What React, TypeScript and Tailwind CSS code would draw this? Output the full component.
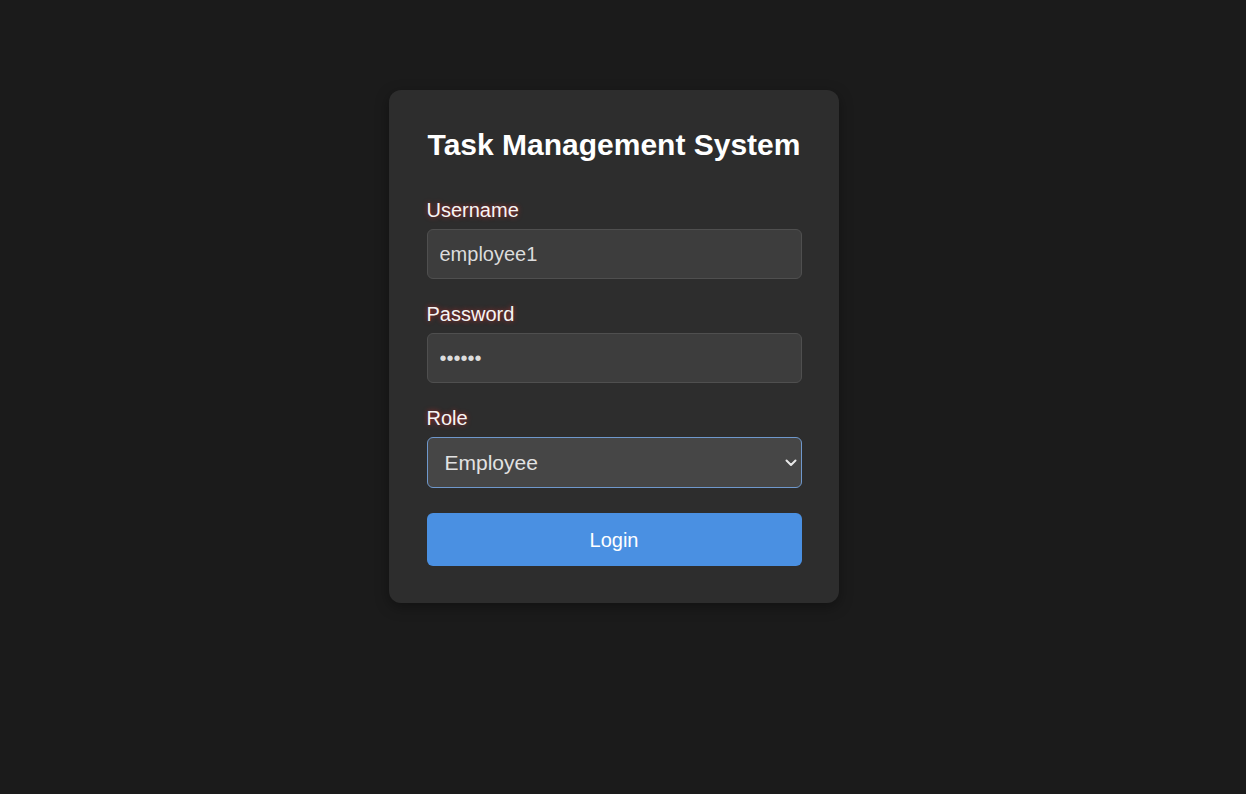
import React from "react";

const labelCls =
  "block text-[20px] leading-[23px] text-[#f5f5f5] mb-[7px] [text-shadow:0_0_5px_rgba(230,40,40,0.7)]";
const inputCls =
  "block w-full h-[50px] rounded-[6px] border border-[#4f4f4f] bg-[#3d3d3d] px-[12px] text-[20px] text-[#dcdcdc] outline-none";

export default function App() {
  return (
    <div
      className="min-h-[794px] w-full bg-[#1b1b1b] flex justify-center pt-[90px] pr-[19px]"
      style={{ fontFamily: '"Liberation Sans", Arial, sans-serif' }}
    >
      <div className="w-[450px] h-[513px] rounded-[12px] bg-[#2d2d2d] pl-[38px] pr-[37px] pt-[38px] pb-[37px] shadow-[0_4px_14px_rgba(0,0,0,0.35)]">
        <h1 className="text-center text-[30px] leading-[34px] font-bold text-white mb-[37px]">
          Task Management System
        </h1>

        <div className="mb-[24px]">
          <label className={labelCls}>Username</label>
          <input className={inputCls} readOnly value="employee1" />
        </div>

        <div className="mb-[24px]">
          <label className={labelCls}>Password</label>
          <input className={inputCls} readOnly type="password" value="123456" />
        </div>

        <div className="mb-[25px]">
          <label className={labelCls}>Role</label>
          <div className="relative">
            <select
              className="block w-full h-[51px] appearance-none rounded-[6px] border border-[#6f98cc] bg-[#464646] pl-[17px] pr-[40px] text-[21px] text-[#e2e2e2] outline-none"
              defaultValue="employee"
            >
              <option value="employee">Employee</option>
              <option value="admin">Admin</option>
            </select>
            <svg
              className="pointer-events-none absolute right-[5px] top-[22px]"
              width="12"
              height="8"
              viewBox="0 0 12 8"
              fill="none"
            >
              <path
                d="M1.5 1.5L6 6L10.5 1.5"
                stroke="#e8e8e8"
                strokeWidth="2"
                strokeLinecap="round"
                strokeLinejoin="round"
              />
            </svg>
          </div>
        </div>

        <button className="block w-full h-[53px] rounded-[6px] bg-[#4a90e2] text-[20px] text-white">
          Login
        </button>
      </div>
    </div>
  );
}
